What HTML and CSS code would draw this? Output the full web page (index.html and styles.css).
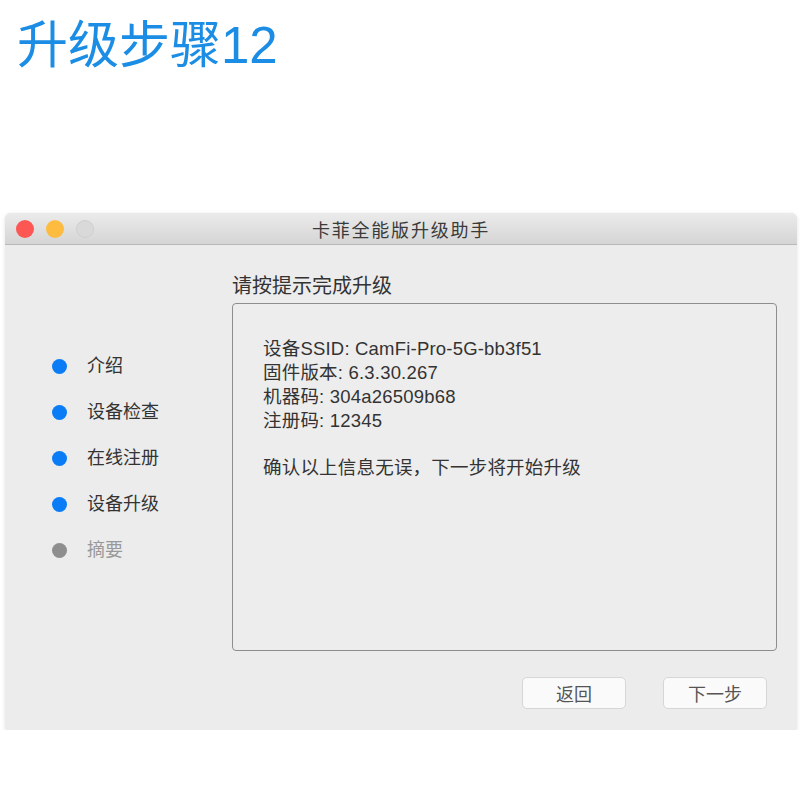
FILE: index.html
```html
<!DOCTYPE html>
<html lang="zh-CN">
<head>
    <meta charset="UTF-8">
    <title>升级步骤12</title>
    <link rel="stylesheet" href="styles.css">
</head>
<body>
    <h1 class="page-title">升级步骤12</h1>

    <div class="window">
        <div class="titlebar">
            <div class="lights">
                <span class="light red"></span>
                <span class="light yellow"></span>
                <span class="light off"></span>
            </div>
            <div class="window-title">卡菲全能版升级助手</div>
            <div></div>
        </div>

        <div class="window-body">
            <ul class="steps">
                <li class="step done">介绍</li>
                <li class="step done">设备检查</li>
                <li class="step done">在线注册</li>
                <li class="step done">设备升级</li>
                <li class="step">摘要</li>
            </ul>

            <div class="main">
                <div class="main-title">请按提示完成升级</div>
                <div class="info-box">
                    <p>设备SSID: CamFi-Pro-5G-bb3f51</p>
                    <p>固件版本: 6.3.30.267</p>
                    <p>机器码: 304a26509b68</p>
                    <p>注册码: 12345</p>
                    <p class="confirm">确认以上信息无误，下一步将开始升级</p>
                </div>
                <div class="buttons">
                    <button class="btn">返回</button>
                    <button class="btn">下一步</button>
                </div>
            </div>
        </div>
    </div>
</body>
</html>
```

FILE: styles.css
```css
body {
    margin: 0;
    background: #fff;
    font-family: "Liberation Sans", "Noto Sans CJK SC", sans-serif;
    color: #333;
}
.page-title {
    margin: 0;
    padding: 17px 0 0 17px;
    font-size: 51px;
    font-weight: normal;
    line-height: 58px;
    color: #1b8de4;
}
.window {
    margin: 138px 3px 0 5px;
    height: 517px;
    background: #ececec;
    border-radius: 6px 6px 2px 2px;
    box-shadow: 0 1px 4px rgba(0,0,0,0.12);
    display: flex;
    flex-direction: column;
}
.titlebar {
    height: 31px;
    display: grid;
    grid-template-columns: 1fr auto 1fr;
    align-items: center;
    background: linear-gradient(#ebebeb, #d5d5d5);
    border-bottom: 1px solid #b8b8b8;
    border-radius: 6px 6px 0 0;
}
.lights {
    display: flex;
    gap: 12px;
    padding-left: 11px;
}
.light {
    width: 18px;
    height: 18px;
    border-radius: 50%;
}
.light.red { background: #fc5753; }
.light.yellow { background: #fdbc40; }
.light.off { background: #d9d9d9; border: 1px solid #cfcfcf; box-sizing: border-box; }
.window-title {
    font-size: 18px;
    color: #3a3a3a;
    letter-spacing: 1.8px;
}
.window-body {
    flex: 1;
    display: flex;
}
.steps {
    list-style: none;
    margin: 0;
    padding: 109px 0 0 47px;
    width: 180px;
    display: flex;
    flex-direction: column;
    gap: 22px;
}
.step {
    display: flex;
    align-items: center;
    gap: 20px;
    font-size: 18px;
    line-height: 24px;
    color: #999;
}
.step::before {
    content: "";
    width: 15px;
    height: 15px;
    border-radius: 50%;
    background: #8e8e8e;
}
.step.done { color: #333; }
.step.done::before { background: #0a7cf6; }
.main {
    flex: 1;
    display: flex;
    flex-direction: column;
    padding: 28px 20px 20px 0;
}
.main-title {
    font-size: 20px;
    line-height: 26px;
    margin-bottom: 4px;
    color: #333;
}
.info-box {
    height: 348px;
    border: 1px solid #8e8e8e;
    border-radius: 4px;
    background: #ededed;
    padding: 33px 30px;
    box-sizing: border-box;
}
.info-box p {
    margin: 0;
    font-size: 18.5px;
    line-height: 24px;
    letter-spacing: 0.2px;
}
.info-box .confirm {
    margin-top: 23px;
}
.buttons {
    display: flex;
    justify-content: flex-end;
    gap: 37px;
    margin-top: 26px;
    padding-right: 10px;
}
.btn {
    width: 104px;
    height: 32px;
    font-family: inherit;
    font-size: 18px;
    color: #555;
    background: #fafafa;
    border: 1px solid #d6d6d6;
    border-radius: 5px;
}
```
